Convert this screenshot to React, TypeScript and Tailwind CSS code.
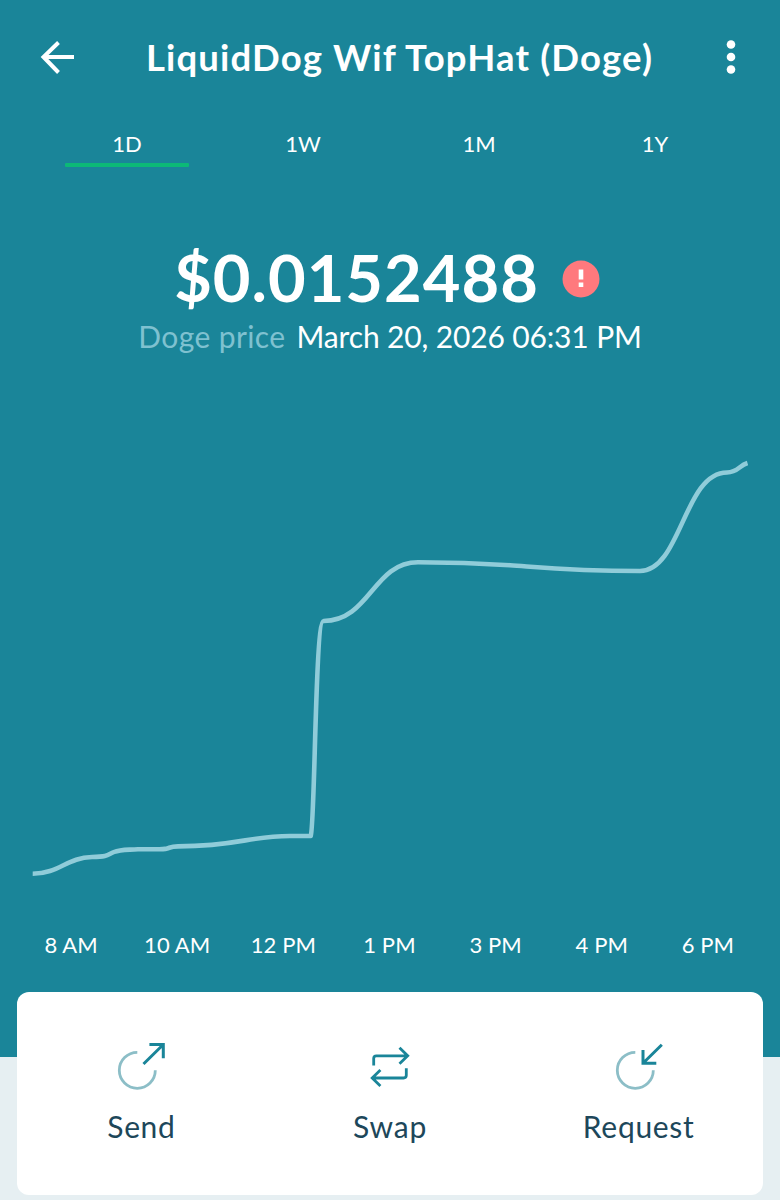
import React from "react";

const tabs = ["1D", "1W", "1M", "1Y"];
const hours = ["8 AM", "10 AM", "12 PM", "1 PM", "3 PM", "4 PM", "6 PM"];

function SendIcon() {
  return (
    <svg width="60" height="60" viewBox="0 0 60 60" fill="none" strokeWidth="2.8">
      <path d="M26.3 14.3A18 18 0 1 0 44.3 32.3" stroke="#8cbec7" />
      <path d="M32.5 26L52.3 6.5M38.4 6.5H52.3V20.2" stroke="#1a8599" strokeWidth="3" />
    </svg>
  );
}

function SwapIcon() {
  return (
    <svg width="60" height="60" viewBox="0 0 60 60" fill="none" stroke="#1a8599" strokeWidth="2.8">
      <path d="M13.7 27.5V20.5Q13.7 17.8 16.4 17.8H47.5M39.5 9.8L47.7 17.8L39.5 25.8" />
      <path d="M46.3 30.3V37.3Q46.3 40 43.6 40H12.5M20.4 32L12.2 40L20.4 48" />
    </svg>
  );
}

function RequestIcon() {
  return (
    <svg width="60" height="60" viewBox="0 0 60 60" fill="none" strokeWidth="2.8">
      <path d="M26.3 14.3A18 18 0 1 0 44.3 32.3" stroke="#8cbec7" />
      <path d="M52.8 6.8L34 25.3M34 12V25.3H47.3" stroke="#1a8599" strokeWidth="3" />
    </svg>
  );
}

const actions = [
  { label: "Send", Icon: SendIcon, tracking: "tracking-[0.6px]" },
  { label: "Swap", Icon: SwapIcon, tracking: "tracking-[0.8px]" },
  { label: "Request", Icon: RequestIcon, tracking: "tracking-[0.7px]" },
];

export default function App() {
  return (
    <div className="h-[1200px] w-[780px] overflow-hidden bg-[#e6eff2] font-['Lato','Noto_Sans',sans-serif]">
      <section className="flex h-[1057px] flex-col bg-[#1a8599] text-white">
        <header className="flex h-[86px] items-center justify-between pt-[28px] pr-[20px] pl-[33px]">
          <button aria-label="Back" className="flex w-12 justify-center">
            <svg width="48" height="48" viewBox="0 0 48 48" fill="none" stroke="#fff" strokeWidth="4">
              <path d="M41 24H10M25.5 9.5L10.5 24L25.5 39.5" />
            </svg>
          </button>
          <h1 className="pl-[16px] text-[36.5px] leading-[56px] font-bold tracking-[1.15px] whitespace-nowrap">
            LiquidDog Wif TopHat (Doge)
          </h1>
          <button aria-label="More" className="flex w-[58px] justify-center">
            <svg width="16" height="48" viewBox="0 0 16 48" fill="#fff">
              <circle cx="8" cy="11.5" r="4.3" />
              <circle cx="8" cy="24" r="4.3" />
              <circle cx="8" cy="36.5" r="4.3" />
            </svg>
          </button>
        </header>

        <nav className="mt-[42px] ml-[39px] grid w-[704px] grid-cols-4">
          {tabs.map((tab, i) => (
            <div key={tab} className="flex flex-col items-center">
              <span className="text-[22px] leading-[32px]">{tab}</span>
              {i === 0 && <span className="mt-[3px] h-1 w-[124px] rounded-[1px] bg-[#0cb977]" />}
            </div>
          ))}
        </nav>

        <div className="mt-[71px] flex h-[78px] items-center justify-center gap-[23px] pr-[6px]">
          <span className="text-[65px] leading-[78px] font-bold tracking-[1px]">$0.0152488</span>
          <svg className="mt-[3px]" width="38" height="38" viewBox="0 0 38 38">
            <circle cx="19" cy="19" r="18.5" fill="#ff797d" />
            <path d="M16.7 9.5H21.3V19.5H16.7ZM16.7 22.5H21.3V27H16.7Z" fill="#fff" />
          </svg>
        </div>
        <p className="flex h-[40px] items-center justify-center gap-[11px] text-[30px] leading-[40px] whitespace-nowrap">
          <span className="tracking-[0.4px] text-[#7fc1d0]">Doge price</span>
          <span className="tracking-[-0.15px]">March 20, 2026 06:31 PM</span>
        </p>

        <svg className="mt-[44px] shrink-0" width="780" height="500" viewBox="0 400 780 500" fill="none">
          <path
            d="M32.7 873.7C59 873.7 67 857.5 92 857C109 856.5 107 855 114 852C120 849.5 124 850 138 849.2C152 849 162 850 167 848.5C173 846.5 172 846.5 178 846.4C240 846 248 836 290 836H310.7C315 826 315 621 323.5 621C370 621 373 562.3 418 562.3C455 562.3 475 563 510 565.2C548 568 575 571 640 571C681 571 684 472.5 727 472.5C738 472.5 739 465.5 747.5 463"
            stroke="#90ccd9"
            strokeWidth="4.6"
            strokeLinejoin="round"
          />
        </svg>

        <div className="mt-[29px] ml-[18px] grid w-[743px] grid-cols-7 text-center text-[22px] leading-[32px] tracking-[0.1px]">
          {hours.map((hour) => (
            <span key={hour}>{hour}</span>
          ))}
        </div>
      </section>

      <section className="relative mx-[17px] -mt-[65px] grid h-[203px] grid-cols-3 rounded-[12px] bg-white pt-[46px] text-[#1d475a]">
        {actions.map(({ label, Icon, tracking }) => (
          <button key={label} className="flex flex-col items-center">
            <Icon />
            <span className={`mt-[8px] text-[30px] leading-[40px] ${tracking}`}>{label}</span>
          </button>
        ))}
      </section>
    </div>
  );
}
